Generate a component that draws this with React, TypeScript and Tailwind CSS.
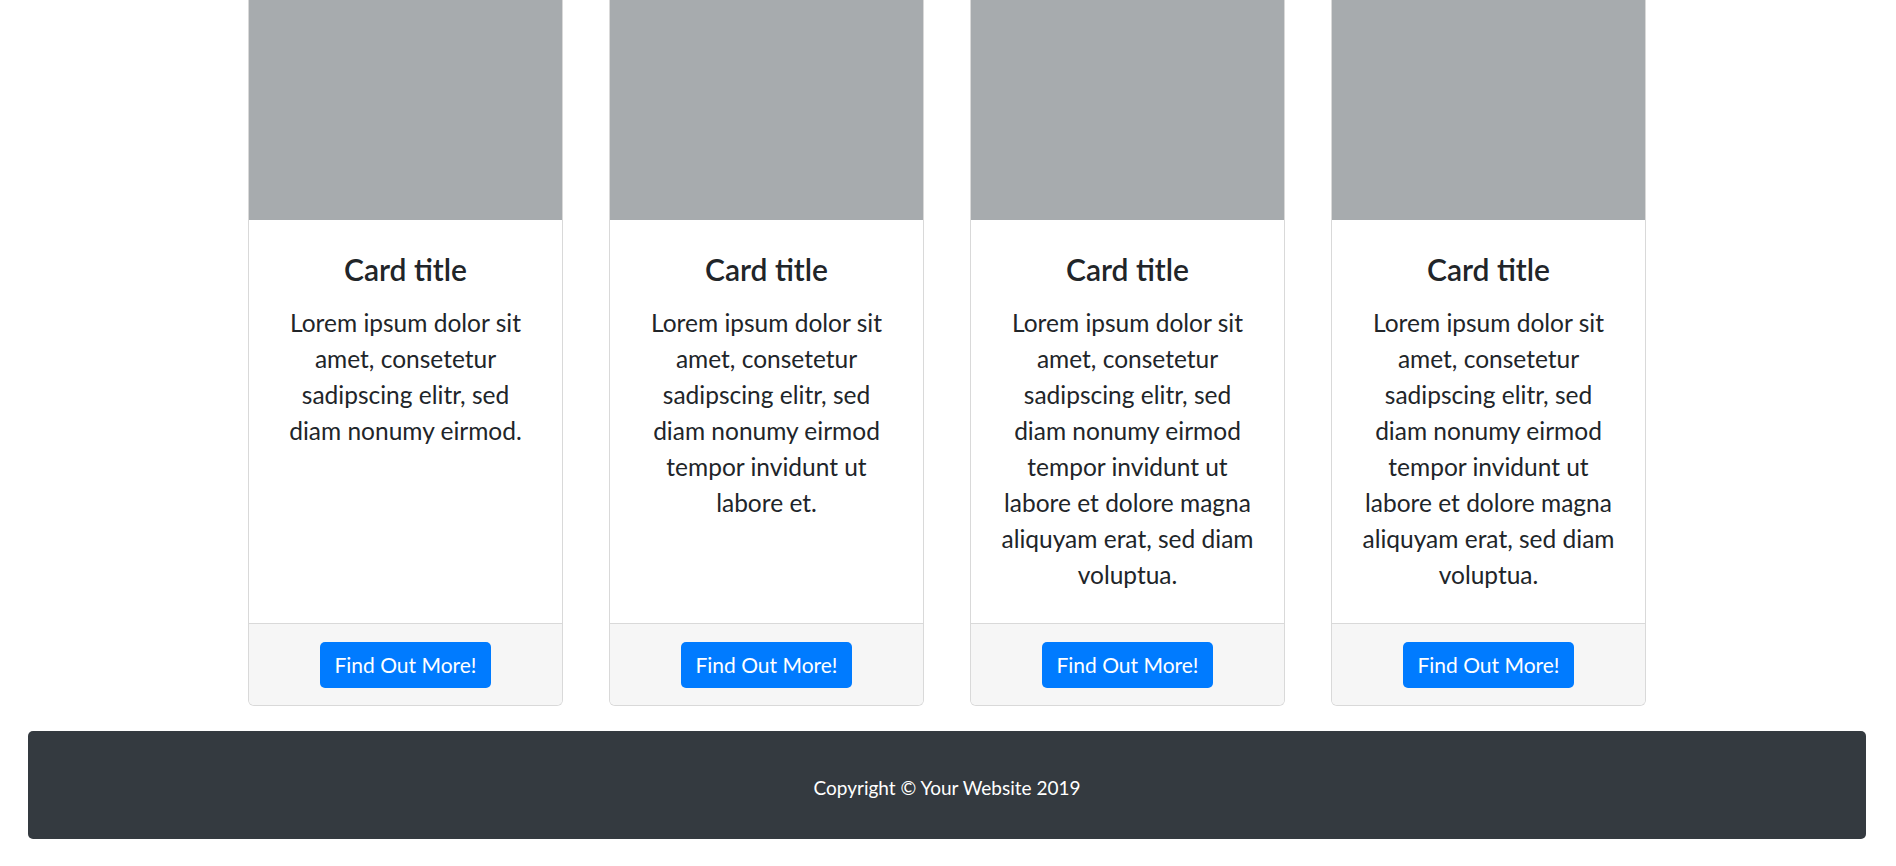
const cards = [
  {
    id: 1,
    lines: ["Lorem ipsum dolor sit", "amet, consetetur", "sadipscing elitr, sed", "diam nonumy eirmod."],
  },
  {
    id: 2,
    lines: [
      "Lorem ipsum dolor sit",
      "amet, consetetur",
      "sadipscing elitr, sed",
      "diam nonumy eirmod",
      "tempor invidunt ut",
      "labore et.",
    ],
  },
  {
    id: 3,
    lines: [
      "Lorem ipsum dolor sit",
      "amet, consetetur",
      "sadipscing elitr, sed",
      "diam nonumy eirmod",
      "tempor invidunt ut",
      "labore et dolore magna",
      "aliquyam erat, sed diam",
      "voluptua.",
    ],
  },
  {
    id: 4,
    lines: [
      "Lorem ipsum dolor sit",
      "amet, consetetur",
      "sadipscing elitr, sed",
      "diam nonumy eirmod",
      "tempor invidunt ut",
      "labore et dolore magna",
      "aliquyam erat, sed diam",
      "voluptua.",
    ],
  },
];

export default function App() {
  return (
    <div className="w-[1896px] h-[866px] overflow-hidden bg-white font-['Lato','Liberation_Sans',sans-serif] text-[#212529]">
      {/* Cards */}
      <div className="grid grid-cols-[repeat(4,315px)] gap-x-[46px] ml-[248px]">
        {cards.map((card) => (
          <div
            key={card.id}
            className="flex flex-col bg-white border border-t-0 border-[#d9d9d9] rounded-b-[6px] overflow-hidden"
          >
            {/* Image placeholder */}
            <div className="h-[220px] bg-[#a7abae]" />

            {/* Body */}
            <div className="flex-1 px-[29px] pt-[31px] pb-[30px] text-center">
              <h5 className="text-[30px] leading-[36px] font-semibold mb-[18px]">Card title</h5>
              <p className="text-[24.5px] leading-[36px]">
                {card.lines.map((line, i) => (
                  <span key={i} className="block whitespace-nowrap">
                    {line}
                  </span>
                ))}
              </p>
            </div>

            {/* Footer */}
            <div className="border-t border-[#d9d9d9] bg-[#f6f6f6] pt-[18px] pb-[17px] flex justify-center">
              <a
                href="#"
                className="h-[46px] px-[14px] flex items-center rounded-[5px] bg-[#007bff] text-white text-[21px]"
              >
                Find Out More!
              </a>
            </div>
          </div>
        ))}
      </div>

      {/* Page footer */}
      <footer className="mt-[25px] ml-[28px] w-[1838px] h-[108px] pt-[7px] rounded-[5px] bg-[#343a40] flex items-center justify-center">
        <p className="text-white text-[19px]">Copyright © Your Website 2019</p>
      </footer>
    </div>
  );
}
